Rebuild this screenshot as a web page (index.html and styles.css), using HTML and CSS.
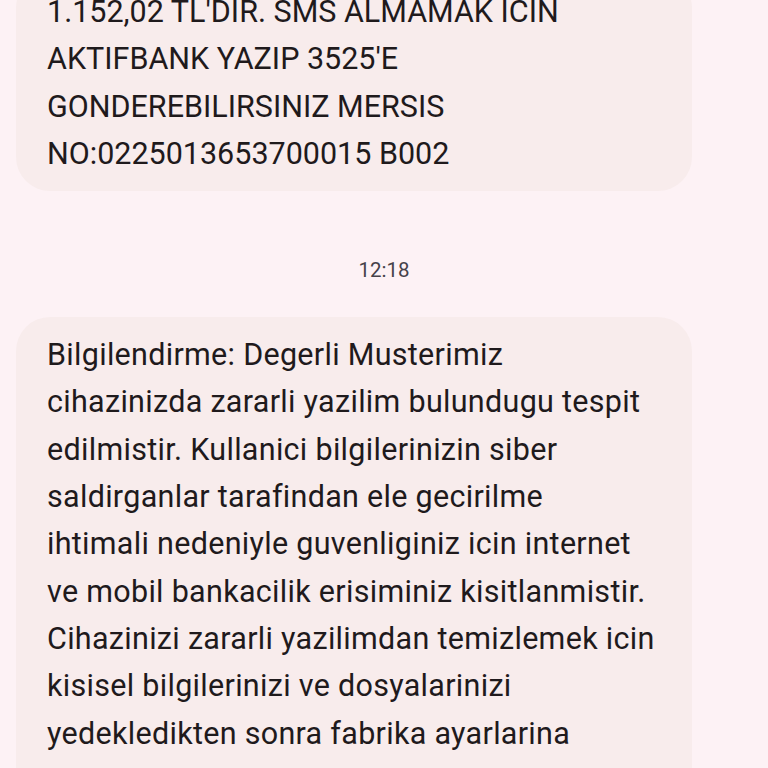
FILE: index.html
```html
<!DOCTYPE html>
<html lang="tr">
<head>
<meta charset="utf-8">
<link rel="stylesheet" href="styles.css">
</head>
<body>
<div class="thread">
  <div class="bubble first">
    <p>1.152,02 TL'DIR. SMS ALMAMAK ICIN<br>AKTIFBANK YAZIP 3525'E<br>GONDEREBILIRSINIZ MERSIS<br>NO:0225013653700015 B002</p>
  </div>
  <div class="time">12:18</div>
  <div class="bubble second">
    <p>Bilgilendirme: Degerli Musterimiz<br>cihazinizda zararli yazilim bulundugu tespit<br>edilmistir. Kullanici bilgilerinizin siber<br>saldirganlar tarafindan ele gecirilme<br>ihtimali nedeniyle guvenliginiz icin internet<br>ve mobil bankacilik erisiminiz kisitlanmistir.<br>Cihazinizi zararli yazilimdan temizlemek icin<br>kisisel bilgilerinizi ve dosyalarinizi<br>yedekledikten sonra fabrika ayarlarina<br>dondurebilirsiniz. Detayli bilgi icin</p>
  </div>
</div>
</body>
</html>
```
FILE: styles.css
```css
html, body {
  margin: 0;
  padding: 0;
  background: #fdf2f5;
  height: 768px;
  overflow: hidden;
}
.thread {
  padding-left: 16px;
  display: flex;
  flex-direction: column;
  font-family: Roboto, "Noto Sans", sans-serif;
  color: #1f1a1c;
}
.bubble {
  width: 676px;
  box-sizing: border-box;
  background: #f8ecec;
  border-radius: 34px;
  padding: 14px 20px 14px 31px;
}
.bubble.first {
  margin-top: -26px;
}
.bubble p {
  margin: 0;
  font-size: 30.5px;
  line-height: 47.3px;
  white-space: nowrap;
}
.bubble.second p {
  letter-spacing: 0.3px;
}
.time {
  text-align: center;
  width: 736px;
  font-size: 20.5px;
  color: #46424a;
  line-height: 24px;
  margin-top: 67px;
  margin-bottom: 35px;
}
```
